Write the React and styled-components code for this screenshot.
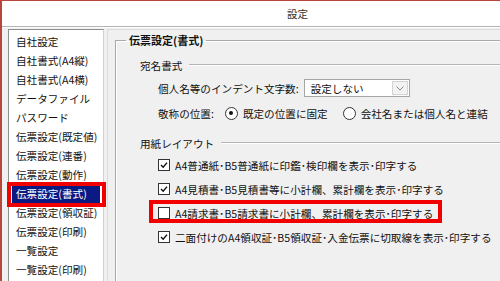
import React from "react";
import styled, { createGlobalStyle } from "styled-components";

const Global = createGlobalStyle`
  html, body {
    margin: 0;
    padding: 0;
    width: 500px;
    height: 281px;
    overflow: hidden;
    background: #fff;
  }
  body {
    font-family: "Noto Sans CJK JP", "Noto Sans", sans-serif;
    font-size: 10.6px;
    color: #111;
  }
`;

const Window = styled.div`
  width: 500px;
  height: 281px;
  box-sizing: border-box;
  border-left: 2px solid #b9453d;
  border-top: 1px solid #b9453d;
  display: flex;
  flex-direction: column;
  overflow: hidden;
`;

const TitleBar = styled.div`
  height: 25px;
  flex-shrink: 0;
  background: #fff;
  border-bottom: 1px solid #b4b4b4;
  display: flex;
  align-items: center;
  padding-left: 285px;
  color: #333;
`;

const Body = styled.div`
  flex: 1;
  background: #f0f0f0;
  border-top: 1px solid #fdfdfd;
  display: flex;
  gap: 3px;
  padding: 1px 0 0 6px;
  min-height: 0;
`;

const ListBox = styled.ul`
  list-style: none;
  margin: 0;
  padding: 2px 0 0;
  width: 94px;
  flex-shrink: 0;
  background: #fff;
  border: 1px solid #8e8e8e;
  border-right-color: #d0d0d0;
  border-bottom: none;
`;

const ListItem = styled.li`
  position: relative;
  height: 19px;
  line-height: 19px;
  margin: 0 3px;
  padding-left: 4px;
  white-space: nowrap;
  background: ${(p) => (p.$selected ? "#0b1a82" : "transparent")};
  color: ${(p) => (p.$selected ? "#fff" : "#111")};
`;

const Highlight = styled.span`
  position: absolute;
  pointer-events: none;
  border: 4px solid #f20000;
  top: ${(p) => p.$t}px;
  left: ${(p) => p.$l}px;
  right: ${(p) => p.$r}px;
  bottom: ${(p) => p.$b}px;
`;

const Panel = styled.div`
  flex: 1;
  border-top: 1px solid #dcdcdc;
  border-left: 1px solid #dcdcdc;
  overflow: hidden;
`;

const Group = styled.fieldset`
  margin: 3px 0 0 7px;
  padding: 0;
  border: 1px solid #a9a9a9;
  border-right: none;
  border-bottom: none;
  box-shadow: inset 1px 1px 0 #fff;
  min-width: 0;
  height: 260px;
`;

const Legend = styled.legend`
  margin-left: 10px;
  padding: 0 3px;
  line-height: 14px;
  font-size: 11px;
  font-weight: bold;
  color: #111;
`;

const SubTitle = styled.div`
  display: flex;
  align-items: center;
  gap: 7px;
  height: 14px;
  margin-top: ${(p) => p.$mt}px;
  padding-left: 24px;

  &::after {
    content: "";
    flex: 1;
    border-top: 1px solid #b4b4b4;
    border-bottom: 1px solid #fff;
  }
`;

const Row = styled.div`
  display: flex;
  align-items: center;
  height: ${(p) => p.$h}px;
  margin-top: ${(p) => p.$mt || 0}px;
  padding-left: 42px;
  gap: ${(p) => p.$gap || 5}px;
  white-space: nowrap;
`;

const Option = styled.label`
  position: relative;
  display: inline-flex;
  align-items: center;
  align-self: stretch;
  gap: 5px;
`;

const Select = styled.div`
  width: 97px;
  height: 16px;
  border: 1px solid #a5a5a5;
  background: #fff;
  display: flex;
  align-items: center;
  justify-content: space-between;
  padding: 0 1px 0 6px;
`;

const SelectButton = styled.span`
  width: 16px;
  height: 14px;
  box-sizing: border-box;
  border: 1px solid #d4d4d4;
  background: #f2f2f2;
  display: flex;
  align-items: center;
  justify-content: center;
`;

const Radio = styled.span`
  width: 11px;
  height: 11px;
  border: 1px solid #333;
  border-radius: 50%;
  background: #fff;
  display: flex;
  align-items: center;
  justify-content: center;
  flex-shrink: 0;
  margin-left: ${(p) => p.$ml || 0}px;

  &::after {
    content: "";
    width: 4px;
    height: 4px;
    border-radius: 50%;
    background: ${(p) => (p.$checked ? "#111" : "transparent")};
  }
`;

const Box = styled.span`
  width: 10px;
  height: 10px;
  border: 1px solid #333;
  background: #fff;
  display: flex;
  align-items: center;
  justify-content: center;
  flex-shrink: 0;
`;

const items = [
  "自社設定",
  "自社書式(A4縦)",
  "自社書式(A4横)",
  "データファイル",
  "パスワード",
  "伝票設定(既定値)",
  "伝票設定(連番)",
  "伝票設定(動作)",
  "伝票設定(書式)",
  "伝票設定(領収証)",
  "伝票設定(印刷)",
  "一覧設定",
  "一覧設定(印刷)",
];

const options = [
  { text: "A4普通紙･B5普通紙に印鑑･検印欄を表示･印字する", checked: true },
  { text: "A4見積書･B5見積書等に小計欄、累計欄を表示･印字する", checked: true },
  { text: "A4請求書･B5請求書に小計欄、累計欄を表示･印字する", checked: false, marked: true },
  { text: "二面付けのA4領収証･B5領収証･入金伝票に切取線を表示･印字する", checked: true },
];

const Check = ({ checked }) => (
  <Box>
    {checked && (
      <svg width="8" height="8" viewBox="0 0 8 8">
        <path d="M1 4 L3.2 6.2 L7 1.6" fill="none" stroke="#111" strokeWidth="1.4" />
      </svg>
    )}
  </Box>
);

const App = () => {
  return (
    <Window>
      <Global />
      <TitleBar>設定</TitleBar>
      <Body>
        <ListBox>
          {items.map((label) => {
            const selected = label === "伝票設定(書式)";
            return (
              <ListItem key={label} $selected={selected}>
                {label}
                {selected && <Highlight $t={-2} $l={-5} $r={-6} $b={-4} />}
              </ListItem>
            );
          })}
        </ListBox>
        <Panel>
          <Group>
            <Legend>伝票設定(書式)</Legend>
            <SubTitle $mt={11}>宛名書式</SubTitle>
            <Row $h={24} $mt={4}>
              個人名等のインデント文字数:
              <Select>
                <span>設定しない</span>
                <SelectButton>
                  <svg width="8" height="5" viewBox="0 0 8 5">
                    <path d="M0.5 0.5 L4 4 L7.5 0.5" fill="none" stroke="#8a8a8a" strokeWidth="1" />
                  </svg>
                </SelectButton>
              </Select>
            </Row>
            <Row $h={26} $gap={5}>
              敬称の位置:
              <Radio $checked $ml={6} />
              既定の位置に固定
              <Radio $ml={10} />
              会社名または個人名と連結
            </Row>
            <SubTitle $mt={10}>用紙レイアウト</SubTitle>
            {options.map((o, i) => (
              <Row key={o.text} $h={24} $mt={i === 0 ? 3 : 0}>
                <Option>
                  <Check checked={o.checked} />
                  {o.text}
                  {o.marked && <Highlight $t={-1} $l={-9} $r={-9} $b={2} />}
                </Option>
              </Row>
            ))}
          </Group>
        </Panel>
      </Body>
    </Window>
  );
};

export default App;
